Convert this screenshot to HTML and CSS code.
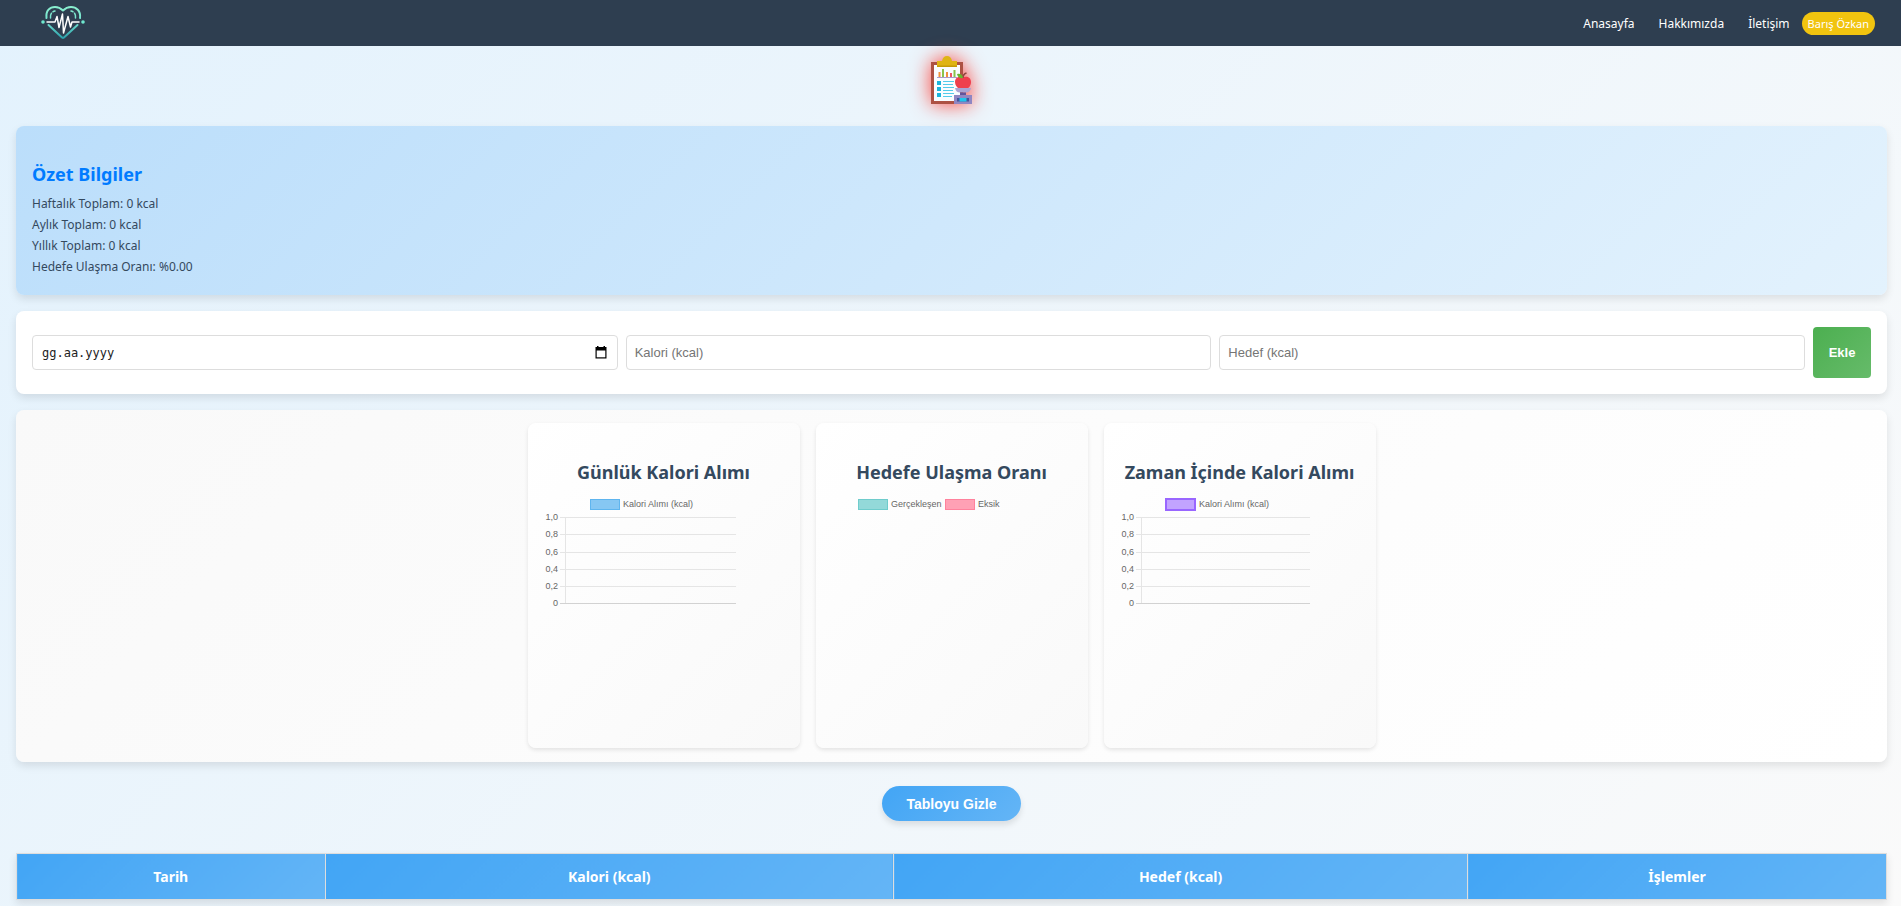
FILE: index.html
```html
<!DOCTYPE html>
<html lang="tr">
<head>
<meta charset="utf-8">
<meta name="viewport" content="width=device-width, initial-scale=1">
<title>Kalori Takibi</title>
<link rel="stylesheet" href="styles.css">
</head>
<body>
<header class="navbar">
  <a class="logo" href="#" aria-label="Anasayfa">
    <svg width="46" height="36" viewBox="0 0 46 36" fill="none" stroke-linecap="round" stroke-linejoin="round">
      <defs>
        <linearGradient id="heart" x1="0" y1="0" x2="0" y2="36" gradientUnits="userSpaceOnUse">
          <stop offset="0" stop-color="#8df0cf"/><stop offset=".5" stop-color="#6fe0cf"/><stop offset="1" stop-color="#1f93a3"/>
        </linearGradient>
      </defs>
      <g stroke="url(#heart)">
        <path stroke-width="2" d="M6.500 13C5.500 5.500 10 2 15 2C18.500 2 21 3.500 23 5.500C25 3.500 27.500 2 31 2C36 2 41 5.500 40 13"/>
        <path stroke-width="2" d="M8.500 20L22 32.500Q23 33.300 24 32.500L37.500 20"/>
        <path stroke-width="1.500" d="M10.500 13C10 9 12 6.500 15 6M35.500 13C36 9 34 6.500 31 6" stroke-dasharray="5 2"/>
      </g>
      <circle cx="3" cy="17" r="1.800" fill="#6fe8cf"/><circle cx="43" cy="17" r="1.800" fill="#6fe8cf"/>
      <path stroke="#fff" stroke-width="1.500" d="M7 17H15L17 11.500L19 22.500L22.500 9L23.500 28L28 11.500L30.500 22L32 17H39"/>
    </svg>
  </a>
  <nav class="links">
    <a href="#">Anasayfa</a>
    <a href="#">Hakkımızda</a>
    <a href="#">İletişim</a>
  </nav>
  <a class="user" href="#">Barış Özkan</a>
</header>

<div class="emblem">
  <svg width="48" height="48" viewBox="0 0 48 48">
    <path fill="#ad5143" d="M4 6H36V48H4z"/><path fill="#fafcff" d="M7 9H33V45H7z"/>
    <path fill="#dfb414" d="M10 11V5H15Q16 0 20 0Q24 0 25 5H30V11z"/><path fill="#c49a08" d="M10 9.500H30V11H10z"/>
    <path stroke="#f0913b" stroke-width="2" d="M12.500 21V16"/><path stroke="#8bc34a" stroke-width="2" d="M16 21V13"/>
    <path stroke="#f0913b" stroke-width="2" d="M20 21V16"/><path stroke="#ed5565" stroke-width="2" d="M24 21V17"/><path stroke="#8bc34a" stroke-width="2" d="M27.500 21V14"/>
    <path stroke="#a99acb" d="M10 21.500H30"/>
    <path fill="#1cb5dc" d="M10 25h4v4h-4zM10 31h4v4h-4zM10 37h4v4h-4z"/>
    <path stroke="#53cbea" d="M16 25.500H27M16 28.500H26M16 31.500H27M16 34.500H26M16 37.500H27M16 40.500H25"/>
    <path fill="#ef3f4d" d="M36 21.500C39 19.500 44 21 44 26C44 30 41 33 39 33H33C30 32 28 29 28 26C28 21 33 19.500 36 21.500z"/>
    <path fill="none" stroke="#8e443d" stroke-width="1.500" d="M36 22Q36 18 39.500 17"/><path fill="#69b52e" d="M30 18Q35 17 36 22Q31 23 30 18z"/>
    <path fill="#aaa4d4" d="M28 32H44Q43 36.500 39 36.500H33Q29 36.500 28 32z"/><path fill="#62549c" d="M33 36.500H39V39H33z"/>
    <path fill="#8f86c3" d="M27 39H45V48H27z"/><path fill="#43539b" d="M30 42H42V45.500H30z"/><path fill="#20c4ed" d="M32.500 42H39.500V45.500H32.500z"/>
  </svg>
</div>

<main class="content">
  <section class="panel summary">
    <h2>Özet Bilgiler</h2>
    <p>Haftalık Toplam: 0 kcal</p>
    <p>Aylık Toplam: 0 kcal</p>
    <p>Yıllık Toplam: 0 kcal</p>
    <p>Hedefe Ulaşma Oranı: %0.00</p>
  </section>

  <form class="panel entry">
    <div class="field date">
      <input type="text" placeholder="gg.aa.yyyy" aria-label="Tarih">
      <svg width="12" height="13" viewBox="0 0 12 13"><path d="M2 0h1.500v1h5V0H10v1h1.500v11.500H.5V1H2z"/><path fill="#fff" d="M1.700 4.500h8.600v6.800H1.700z"/></svg>
    </div>
    <div class="field"><input type="text" placeholder="Kalori (kcal)" aria-label="Kalori (kcal)"></div>
    <div class="field"><input type="text" placeholder="Hedef (kcal)" aria-label="Hedef (kcal)"></div>
    <button class="add" type="button">Ekle</button>
  </form>

  <section class="panel charts">
    <article class="card">
      <h2>Günlük Kalori Alımı</h2>
      <svg class="chart" width="200" height="120" viewBox="0 0 200 120">
        <rect x="46.500" y="9.500" width="29" height="10" fill="#86c7f3" stroke="#5eb5ef"/>
        <text x="79" y="17">Kalori Alımı (kcal)</text>
        <path class="grid" d="M16 27.500H192M16 44.500H192M16 62.500H192M16 79.500H192M16 96.500H192M21.500 27V113"/>
        <path class="base" d="M16 113.500H192"/>
        <g class="ticks"><text x="14" y="30">1,0</text><text x="14" y="47">0,8</text><text x="14" y="65">0,6</text><text x="14" y="82">0,4</text><text x="14" y="99">0,2</text><text x="14" y="116">0</text></g>
      </svg>
    </article>
    <article class="card">
      <h2>Hedefe Ulaşma Oranı</h2>
      <svg class="chart" width="200" height="120" viewBox="0 0 200 120">
        <rect x="26.500" y="9.500" width="29" height="10" fill="#93d9d9" stroke="#6fcccc"/>
        <text x="59" y="17">Gerçekleşen</text>
        <rect x="113.500" y="9.500" width="29" height="10" fill="#ffa1b5" stroke="#ff829d"/>
        <text x="146" y="17">Eksik</text>
      </svg>
    </article>
    <article class="card">
      <h2>Zaman İçinde Kalori Alımı</h2>
      <svg class="chart" width="200" height="120" viewBox="0 0 200 120">
        <rect x="46" y="9" width="29" height="11" fill="#c2a3ff" stroke="#9966ff" stroke-width="2"/>
        <text x="79" y="17">Kalori Alımı (kcal)</text>
        <path class="grid" d="M16 27.500H190M16 44.500H190M16 62.500H190M16 79.500H190M16 96.500H190M21.500 27V113"/>
        <path class="base" d="M16 113.500H190"/>
        <g class="ticks"><text x="14" y="30">1,0</text><text x="14" y="47">0,8</text><text x="14" y="65">0,6</text><text x="14" y="82">0,4</text><text x="14" y="99">0,2</text><text x="14" y="116">0</text></g>
      </svg>
    </article>
  </section>

  <button class="toggle" type="button">Tabloyu Gizle</button>

  <table class="records">
    <colgroup><col class="c-date"><col class="c-cal"><col class="c-goal"><col class="c-act"></colgroup>
    <thead><tr><th>Tarih</th><th>Kalori (kcal)</th><th>Hedef (kcal)</th><th>İşlemler</th></tr></thead>
  </table>
</main>
</body>
</html>
```
FILE: styles.css
```css
* { box-sizing: border-box; }

body {
  margin: 0;
  min-height: 100vh;
  background: linear-gradient(135deg, #e3f2fd, #fafafa);
  color: #34495e;
  font-family: "Noto Sans", "Open Sans", sans-serif;
  font-size: 13px;
}

h2 {
  margin: 0;
  font-size: 18px;
  line-height: 24px;
}

.navbar {
  display: flex;
  align-items: center;
  height: 46px;
  padding: 0 26px 0 40px;
  background: #2e3e50;
}

.logo { display: flex; }

.links {
  display: flex;
  gap: 24px;
  margin: 0 12px 0 auto;
}

.links a {
  color: #fff;
  font-size: 12px;
  text-decoration: none;
}

.user {
  padding: 0 6px;
  border-radius: 12px;
  background: #f1c40f;
  color: #fff;
  font-size: 11px;
  line-height: 23px;
  text-decoration: none;
}

.emblem {
  display: flex;
  justify-content: center;
  padding: 10px 0 22px;
}

.emblem svg {
  filter: drop-shadow(0 0 10px rgba(255, 50, 40, 0.9));
}

.content {
  display: flex;
  flex-direction: column;
  gap: 16px;
  padding: 0 14px 0 16px;
}

.panel {
  border-radius: 8px;
  box-shadow: 0 4px 8px rgba(0, 0, 0, 0.1);
}

.summary {
  padding: 36px 16px 18px;
  background: linear-gradient(135deg, #bbdefb, #e3f2fd);
}

.summary h2 {
  margin-bottom: 7px;
  color: #007bff;
}

.summary p {
  margin: 0;
  font-size: 12px;
  line-height: 21px;
}

.entry {
  display: flex;
  align-items: center;
  gap: 8px;
  padding: 16px;
  background: #fff;
}

.field {
  position: relative;
  flex: 1;
}

.field input {
  display: block;
  width: 100%;
  height: 35px;
  padding: 0 8px;
  border: 1px solid #ddd;
  border-radius: 4px;
  background: #fff;
  font-family: "Liberation Sans", Arial, sans-serif;
  font-size: 13px;
}

.field input::placeholder { color: #757575; }

.date input {
  padding: 0 9px;
  font-family: "DejaVu Sans Mono", monospace;
  font-size: 12px;
}

.date input::placeholder { color: #222; }

.date svg {
  position: absolute;
  top: 11px;
  right: 11px;
}

.add {
  width: 58px;
  height: 51px;
  border: 0;
  border-radius: 4px;
  background: linear-gradient(135deg, #4caf50, #66bb6a);
  color: #fff;
  font: bold 13px "Liberation Sans", Arial, sans-serif;
}

.charts {
  display: flex;
  justify-content: center;
  gap: 16px;
  padding: 13px 16px 14px;
  background: linear-gradient(135deg, #f9f9f9, #fff);
}

.card {
  flex: 0 0 272px;
  min-height: 325px;
  padding: 37px 16px 16px;
  border-radius: 8px;
  background: linear-gradient(135deg, #fff, #f9f9f9);
  box-shadow: 0 2px 4px rgba(0, 0, 0, 0.1);
}

.card h2 {
  margin-bottom: 6px;
  text-align: center;
  white-space: nowrap;
}

.chart {
  display: block;
  font-family: "Liberation Sans", Arial, sans-serif;
  font-size: 9px;
  fill: #666;
}

.ticks { text-anchor: end; }

.grid { stroke: #e5e5e5; }

.base { stroke: #d2d2d2; }

.toggle {
  align-self: center;
  height: 35px;
  margin: 8px 0 16px;
  padding: 0 25px;
  border: 0;
  border-radius: 18px;
  background: linear-gradient(135deg, #42a5f5, #64b5f6);
  box-shadow: 0 4px 6px rgba(0, 0, 0, 0.1);
  color: #fff;
  font: bold 14px "Liberation Sans", Arial, sans-serif;
}

.records {
  width: 100%;
  border-collapse: collapse;
  table-layout: fixed;
  box-shadow: 0 4px 8px rgba(0, 0, 0, 0.1);
}

.records th {
  height: 46px;
  padding: 0;
  border: 1px solid #ddd;
  background: linear-gradient(135deg, #42a5f5, #64b5f6);
  color: #fff;
  font-size: 14px;
}

.c-date { width: 16.5%; }
.c-cal { width: 30.4%; }
.c-goal { width: 30.7%; }
.c-act { width: 22.4%; }
```
